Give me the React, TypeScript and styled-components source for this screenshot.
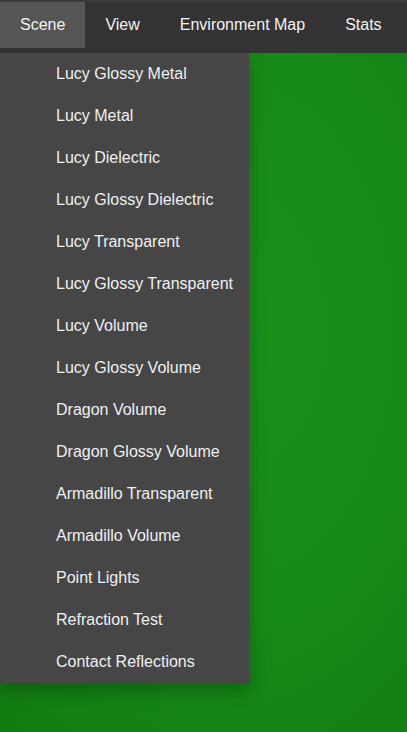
import React from 'react'
import { styled, createGlobalStyle } from 'styled-components'

const GlobalStyle = createGlobalStyle`
html, body {
    margin: 0;
    padding: 0;
    height: 100%;
}
body {
    font-family: "Liberation Sans", Arial, sans-serif;
    overflow: hidden;
}
#root {
    height: 100%;
}
`

const Page = styled.div`
width: 100%;
height: 100%;
display: flex;
flex-direction: column;
background: radial-gradient(ellipse at 60% 45%, #19901a 0%, #168a16 50%, #117b11 100%);
`

const NavBar = styled.nav`
display: flex;
align-items: flex-start;
height: 53px;
box-sizing: border-box;
background-color: #333333;
border-top: 2px solid #3b3b3b;
position: relative;
z-index: 2;
`

const NavItem = styled.div<{ $active?: boolean }>`
display: flex;
align-items: center;
height: 46px;
padding: 0 20px;
font-size: 16px;
color: #f2f2f2;
background-color: ${p => (p.$active ? '#555555' : 'transparent')};
`

const Dropdown = styled.ul`
list-style: none;
margin: 0;
padding: 0;
width: 249px;
background-color: #464646;
box-shadow: 0 8px 16px rgba(0, 0, 0, 0.25);
position: relative;
z-index: 1;
`

const DropdownItem = styled.li`
height: 42px;
display: flex;
align-items: center;
padding-left: 56px;
font-size: 16px;
color: #f0f0f0;
`

const tabs = ['Scene', 'View', 'Environment Map', 'Stats']

const scenes = [
    'Lucy Glossy Metal',
    'Lucy Metal',
    'Lucy Dielectric',
    'Lucy Glossy Dielectric',
    'Lucy Transparent',
    'Lucy Glossy Transparent',
    'Lucy Volume',
    'Lucy Glossy Volume',
    'Dragon Volume',
    'Dragon Glossy Volume',
    'Armadillo Transparent',
    'Armadillo Volume',
    'Point Lights',
    'Refraction Test',
    'Contact Reflections',
]

function App() {
    return (
        <>
            <GlobalStyle />
            <Page>
                <NavBar>
                    {tabs.map(t => (
                        <NavItem key={t} $active={t === 'Scene'}>{t}</NavItem>
                    ))}
                </NavBar>
                <Dropdown>
                    {scenes.map(s => (
                        <DropdownItem key={s}>{s}</DropdownItem>
                    ))}
                </Dropdown>
            </Page>
        </>
    )
}

export default App
